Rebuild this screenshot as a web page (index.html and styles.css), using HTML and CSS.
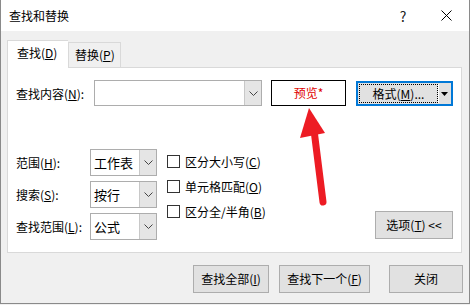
FILE: index.html
```html
<!DOCTYPE html>
<html lang="zh-CN">
<head>
  <meta charset="UTF-8">
  <title>查找和替换</title>
  <link rel="stylesheet" href="styles.css">
</head>
<body>
  <div class="window">
    <!-- 标题栏 -->
    <div class="titlebar">
      <span class="title">查找和替换</span>
      <span class="help">?</span>
      <svg class="close" width="11" height="11" viewBox="0 0 11 11">
        <path d="M0.5 0.5 L10.5 10.5 M10.5 0.5 L0.5 10.5" stroke="#000" stroke-width="1" fill="none"/>
      </svg>
    </div>

    <div class="main">
      <!-- 标签页 -->
      <div class="tabs">
        <div class="tab active">查找(<u>D</u>)</div>
        <div class="tab">替换(<u>P</u>)</div>
      </div>

      <div class="panel">
        <div class="find-row">
          <span class="lbl find-lbl">查找内容(<u>N</u>):</span>
          <div class="combo find-combo">
            <span class="combo-text"></span>
            <span class="combo-btn">
              <svg width="9" height="5" viewBox="0 0 9 5"><path d="M0.5 0.5 L4.5 4.5 L8.5 0.5" stroke="#444" fill="none"/></svg>
            </span>
          </div>
          <div class="preview">预览*</div>
          <div class="format-btn">
            <span class="format-main">格式(<u>M</u>)...</span>
            <span class="format-drop">
              <svg width="7" height="4" viewBox="0 0 7 4"><path d="M0 0 L7 0 L3.5 4 Z" fill="#000"/></svg>
            </span>
          </div>
        </div>

        <div class="options-area">
          <div class="fields">
            <span class="lbl">范围(<u>H</u>):</span>
            <div class="combo">
              <span class="combo-text">工作表</span>
              <span class="combo-btn"><svg width="9" height="5" viewBox="0 0 9 5"><path d="M0.5 0.5 L4.5 4.5 L8.5 0.5" stroke="#444" fill="none"/></svg></span>
            </div>
            <span class="lbl">搜索(<u>S</u>):</span>
            <div class="combo">
              <span class="combo-text">按行</span>
              <span class="combo-btn"><svg width="9" height="5" viewBox="0 0 9 5"><path d="M0.5 0.5 L4.5 4.5 L8.5 0.5" stroke="#444" fill="none"/></svg></span>
            </div>
            <span class="lbl">查找范围(<u>L</u>):</span>
            <div class="combo">
              <span class="combo-text">公式</span>
              <span class="combo-btn"><svg width="9" height="5" viewBox="0 0 9 5"><path d="M0.5 0.5 L4.5 4.5 L8.5 0.5" stroke="#444" fill="none"/></svg></span>
            </div>
          </div>

          <div class="checks">
            <label class="check"><span class="box"></span>区分大小写(<u>C</u>)</label>
            <label class="check"><span class="box"></span>单元格匹配(<u>O</u>)</label>
            <label class="check"><span class="box"></span>区分全/半角(<u>B</u>)</label>
          </div>

          <div class="btn options-btn">选项(<u>T</u>) &lt;&lt;</div>
        </div>
      </div>

      <!-- 底部按钮 -->
      <div class="actions">
        <div class="btn find-all">查找全部(<u>I</u>)</div>
        <div class="btn find-next">查找下一个(<u>F</u>)</div>
        <div class="btn close-btn">关闭</div>
      </div>
    </div>

    <!-- 红色箭头 -->
    <svg class="arrow" width="470" height="305" viewBox="0 0 470 305">
      <line x1="313" y1="130" x2="322" y2="202" stroke="#ed1c24" stroke-width="7" stroke-linecap="round"/>
      <polygon points="308,108 299,138 324,133" fill="#ed1c24"/>
    </svg>
  </div>
</body>
</html>
```

FILE: styles.css
```css
/* 基本设置 */
body {
  margin: 0;
  background: #f0f0f0;
  font-family: "Noto Sans CJK SC", "Noto Sans", sans-serif;
  font-size: 12px;
  color: #000;
}

u {
  text-decoration: underline;
  text-underline-offset: 1px;
}

.window {
  position: relative;
  width: 468px;
  height: 303px;
  border: 1px solid #8a8a8a;
  border-top: none;
  background: #f0f0f0;
}

/* 标题栏 */
.titlebar {
  height: 31px;
  background: #fff;
  display: flex;
  align-items: center;
}

.titlebar .title {
  flex: 1;
  padding-left: 8px;
}

.titlebar .help {
  width: 10px;
  font-size: 14px;
  text-align: center;
  margin-right: 33px;
  color: #222;
}

.titlebar .close {
  margin-right: 17px;
}

.main {
  padding: 9px 6px 0 6px;
}

/* 标签页 */
.tabs {
  display: flex;
  align-items: flex-end;
  height: 27px;
}

.tab {
  height: 25px;
  line-height: 24px;
  border: 1px solid #d9d9d9;
  border-bottom: none;
  background: #f0f0f0;
  box-sizing: border-box;
  white-space: nowrap;
}

.tab.active {
  height: 28px;
  width: 61px;
  padding-left: 9px;
  background: #fff;
  margin-bottom: -1px;
  position: relative;
  z-index: 1;
  border-right: none;
}

.tab:not(.active) {
  width: 53px;
  padding-left: 6px;
}

/* 白色面板 */
.panel {
  height: 186px;
  width: 455px;
  box-sizing: border-box;
  border: 1px solid #d9d9d9;
  background: #fff;
  padding: 12px 0 0 8px;
}

.lbl {
  white-space: nowrap;
}

.find-row {
  display: flex;
  align-items: center;
  height: 26px;
}

.find-lbl {
  width: 78px;
}

.combo {
  display: flex;
  height: 27px;
  box-sizing: border-box;
  border: 1px solid #adadad;
  background: #fff;
}

.combo-text {
  flex: 1;
  line-height: 25px;
  padding-left: 3px;
  font-size: 13px;
}

.combo-btn {
  width: 16px;
  background: #e5e5e5;
  border-left: 1px solid #c8c8c8;
  display: flex;
  align-items: center;
  justify-content: center;
}

.find-combo {
  width: 168px;
  height: 26px;
}

.preview {
  margin-left: 9px;
  width: 75px;
  height: 26px;
  box-sizing: border-box;
  border: 1px solid #000;
  color: #e00000;
  text-align: center;
  line-height: 24px;
}

.format-btn {
  margin-left: 10px;
  width: 97px;
  height: 25px;
  margin-top: 1px;
  box-sizing: border-box;
  border: 2px solid #0078d7;
  background: #e1e1e1;
  display: flex;
  padding: 1px;
}

.format-main {
  flex: 1;
  border: 1px dotted #000;
  text-align: center;
  line-height: 17px;
}

.format-drop {
  width: 11px;
  border-left: 1px solid #fff;
  display: flex;
  align-items: center;
  justify-content: center;
}

/* 选项区域 */
.options-area {
  display: flex;
  margin-top: 43px;
}

.fields {
  display: grid;
  grid-template-columns: 74px 67px;
  row-gap: 5px;
  align-items: center;
}

.checks {
  display: flex;
  flex-direction: column;
  gap: 8px;
  margin-left: 10px;
  padding-top: 4px;
}

.check {
  display: flex;
  align-items: center;
  height: 17px;
  white-space: nowrap;
}

.box {
  width: 13px;
  height: 13px;
  box-sizing: border-box;
  border: 1px solid #333;
  background: #fff;
  margin-right: 5px;
}

.btn {
  box-sizing: border-box;
  border: 1px solid #adadad;
  background: #e1e1e1;
  text-align: center;
  height: 28px;
  line-height: 26px;
  white-space: nowrap;
}

.options-btn {
  width: 78px;
  margin-left: auto;
  margin-right: 8px;
  align-self: flex-end;
  margin-bottom: 1px;
}

/* 底部按钮 */
.actions {
  display: flex;
  justify-content: flex-end;
  margin-top: 12px;
}

.find-all {
  width: 76px;
}

.find-next {
  width: 91px;
  margin-left: 10px;
}

.close-btn {
  width: 74px;
  margin-left: 19px;
}

.arrow {
  position: absolute;
  left: 0;
  top: 0;
  pointer-events: none;
}
```
